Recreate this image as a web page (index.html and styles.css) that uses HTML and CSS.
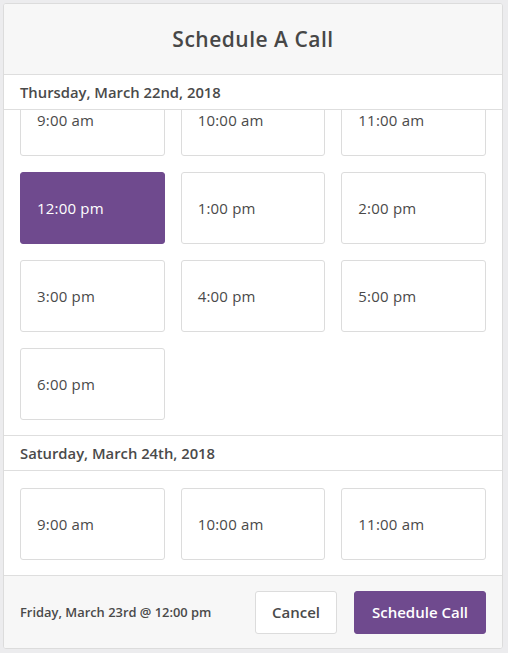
FILE: index.html
```html
<!DOCTYPE html>
<html>
<head>
<meta charset="utf-8">
<link rel="stylesheet" href="styles.css">
</head>
<body>
<div class="modal">
  <div class="modal-header">
    <h1 class="title">Schedule A Call</h1>
  </div>
  <div class="modal-body" id="scroller">
    <section class="day">
      <h2 class="day-title">Thursday, March 22nd, 2018</h2>
      <div class="slots">
        <button class="slot">9:00 am</button>
        <button class="slot">10:00 am</button>
        <button class="slot">11:00 am</button>
        <button class="slot selected">12:00 pm</button>
        <button class="slot">1:00 pm</button>
        <button class="slot">2:00 pm</button>
        <button class="slot">3:00 pm</button>
        <button class="slot">4:00 pm</button>
        <button class="slot">5:00 pm</button>
        <button class="slot">6:00 pm</button>
      </div>
    </section>
    <section class="day">
      <h2 class="day-title">Saturday, March 24th, 2018</h2>
      <div class="slots">
        <button class="slot">9:00 am</button>
        <button class="slot">10:00 am</button>
        <button class="slot">11:00 am</button>
      </div>
    </section>
  </div>
  <div class="modal-footer">
    <span class="summary">Friday, March 23rd @ 12:00 pm</span>
    <div class="actions">
      <button class="btn btn-cancel">Cancel</button>
      <button class="btn btn-primary">Schedule Call</button>
    </div>
  </div>
</div>
<script src="script.js"></script>
</body>
</html>
```
FILE: styles.css
```css
* { box-sizing: border-box; }
html, body { margin: 0; }
body {
  background: #ececee;
  padding: 3px;
  font-family: "Open Sans", "Liberation Sans", sans-serif;
  color: #4a4a4a;
}
.modal {
  width: 500px;
  height: 646px;
  background: #fff;
  border: 1px solid #dcdcdc;
  border-radius: 3px;
  display: flex;
  flex-direction: column;
  overflow: hidden;
}
.modal-header {
  height: 71px;
  flex: none;
  background: #f7f7f7;
  border-bottom: 1px solid #dedede;
  display: flex;
  align-items: center;
  justify-content: center;
}
.title {
  margin: 0;
  font-size: 21px;
  font-weight: 600;
  color: #474747;
  letter-spacing: 0.5px;
}
.modal-body {
  flex: 1;
  overflow-y: auto;
  scrollbar-width: none;
}
.modal-body::-webkit-scrollbar { display: none; }
.day-title {
  position: sticky;
  top: 0;
  margin: 0;
  height: 35px;
  padding: 0 16px;
  background: #fff;
  border-bottom: 1px solid #dedede;
  font-size: 14.8px;
  font-weight: 600;
  color: #4a4a4a;
  display: flex;
  align-items: center;
  z-index: 1;
}
.slots {
  display: grid;
  grid-template-columns: repeat(3, 1fr);
  gap: 16px;
  padding: 17px 16px 15px;
  border-bottom: 1px solid #dedede;
}
.slot {
  height: 72px;
  background: #fff;
  border: 1px solid #dcdcdc;
  border-radius: 3px;
  padding: 0 16px;
  text-align: left;
  font-family: inherit;
  font-size: 15px;
  letter-spacing: 0.2px;
  color: #4a4a4a;
}
.slot.selected {
  background: #6f4a8e;
  border-color: #6f4a8e;
  color: #fff;
}
.modal-footer {
  height: 73px;
  flex: none;
  background: #f7f7f7;
  border-top: 1px solid #dedede;
  display: flex;
  align-items: center;
  justify-content: space-between;
  padding: 0 16px;
}
.summary {
  font-size: 12.9px;
  font-weight: 600;
  color: #4a4a4a;
}
.actions {
  display: flex;
  gap: 17px;
}
.btn {
  height: 43px;
  border-radius: 3px;
  font-family: inherit;
  font-size: 15px;
  font-weight: 600;
  line-height: 1.2;
  padding: 0;
}
.btn-cancel {
  width: 82px;
  background: #fff;
  border: 1px solid #dcdcdc;
  color: #4a4a4a;
}
.btn-primary {
  width: 132px;
  background: #6f4a8e;
  border: 1px solid #6f4a8e;
  color: #fff;
}
```
FILE: script.js
```js
document.getElementById('scroller').scrollTop = 43;
```
